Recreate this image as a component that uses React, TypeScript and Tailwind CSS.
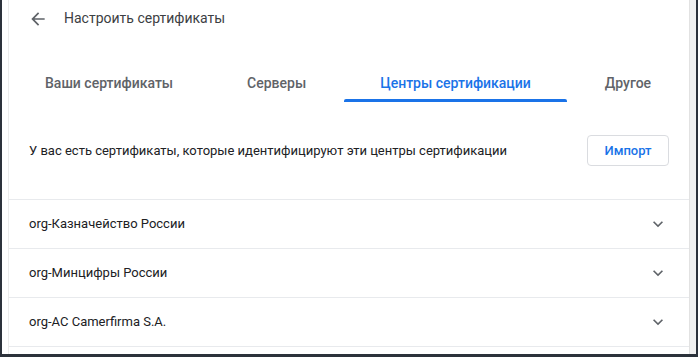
import React from "react";

const Chevron = () => (
  <svg width="20" height="20" viewBox="0 0 24 24" fill="none">
    <path d="M7.41 8.59 12 13.17l4.59-4.58L18 10l-6 6-6-6 1.41-1.41z" fill="#5f6368" />
  </svg>
);

const BackArrow = () => (
  <svg width="20" height="20" viewBox="0 0 24 24">
    <path d="M20 11H7.83l5.59-5.59L12 4l-8 8 8 8 1.41-1.41L7.83 13H20v-2z" fill="#5f6368" />
  </svg>
);

const tabs = ["Ваши сертификаты", "Серверы", "Центры сертификации", "Другое"];
const rows = ["org-Казначейство России", "org-Минцифры России", "org-AC Camerfirma S.A."];

export default function App() {
  return (
    <div
      className="w-[698px] h-[357px] bg-[#2c323b] pl-[2px] pr-[2px] pb-[3px] overflow-hidden"
      style={{ fontFamily: "Roboto, 'Noto Sans', sans-serif" }}
    >
      <div className="flex h-full bg-white">
        <div className="flex-1 pl-[6px] flex min-w-0">
          <div className="flex-1 min-w-0 border-l border-[#ececec] flex flex-col overflow-hidden">
            <div className="h-[37px] flex items-center pl-[19px] shrink-0">
              <BackArrow />
              <span className="ml-[16px] text-[14px] text-[#3c4043]">Настроить сертификаты</span>
            </div>
            <div className="mt-[27px] flex h-[38px] gap-[2px] shrink-0">
              {tabs.map((t, i) => (
                <div
                  key={t}
                  className={
                    i === 2
                      ? "relative shrink-0 whitespace-nowrap flex items-center px-[36px] text-[14px] font-medium text-[#1a73e8]"
                      : "relative shrink-0 whitespace-nowrap flex items-center px-[36px] text-[14px] font-medium text-[#5f6368]"
                  }
                >
                  {t}
                  {i === 2 && (
                    <div className="absolute left-0 right-0 bottom-0 h-[3px] bg-[#1a73e8] rounded-t-[2px]" />
                  )}
                </div>
              ))}
            </div>
            <div className="h-[97px] flex items-center justify-between pl-[20px] pr-[20px] shrink-0">
              <span className="text-[13px] text-[#202124]">
                У вас есть сертификаты, которые идентифицируют эти центры сертификации
              </span>
              <button className="h-[31px] w-[82px] rounded-[4px] border border-[#dadce0] text-[13px] font-medium text-[#1a73e8] bg-white">
                Импорт
              </button>
            </div>
            {rows.map((r) => (
              <div
                key={r}
                className="h-[49px] border-t border-[#e8eaed] flex items-center justify-between pl-[20px] pr-[21px] shrink-0"
              >
                <span className="text-[13px] text-[#202124]">{r}</span>
                <Chevron />
              </div>
            ))}
            <div className="border-t border-[#e8eaed]" />
          </div>
        </div>
        <div className="w-[7px] bg-[#f1f1f1] border-l border-[#e2e2e2]" />
      </div>
    </div>
  );
}
